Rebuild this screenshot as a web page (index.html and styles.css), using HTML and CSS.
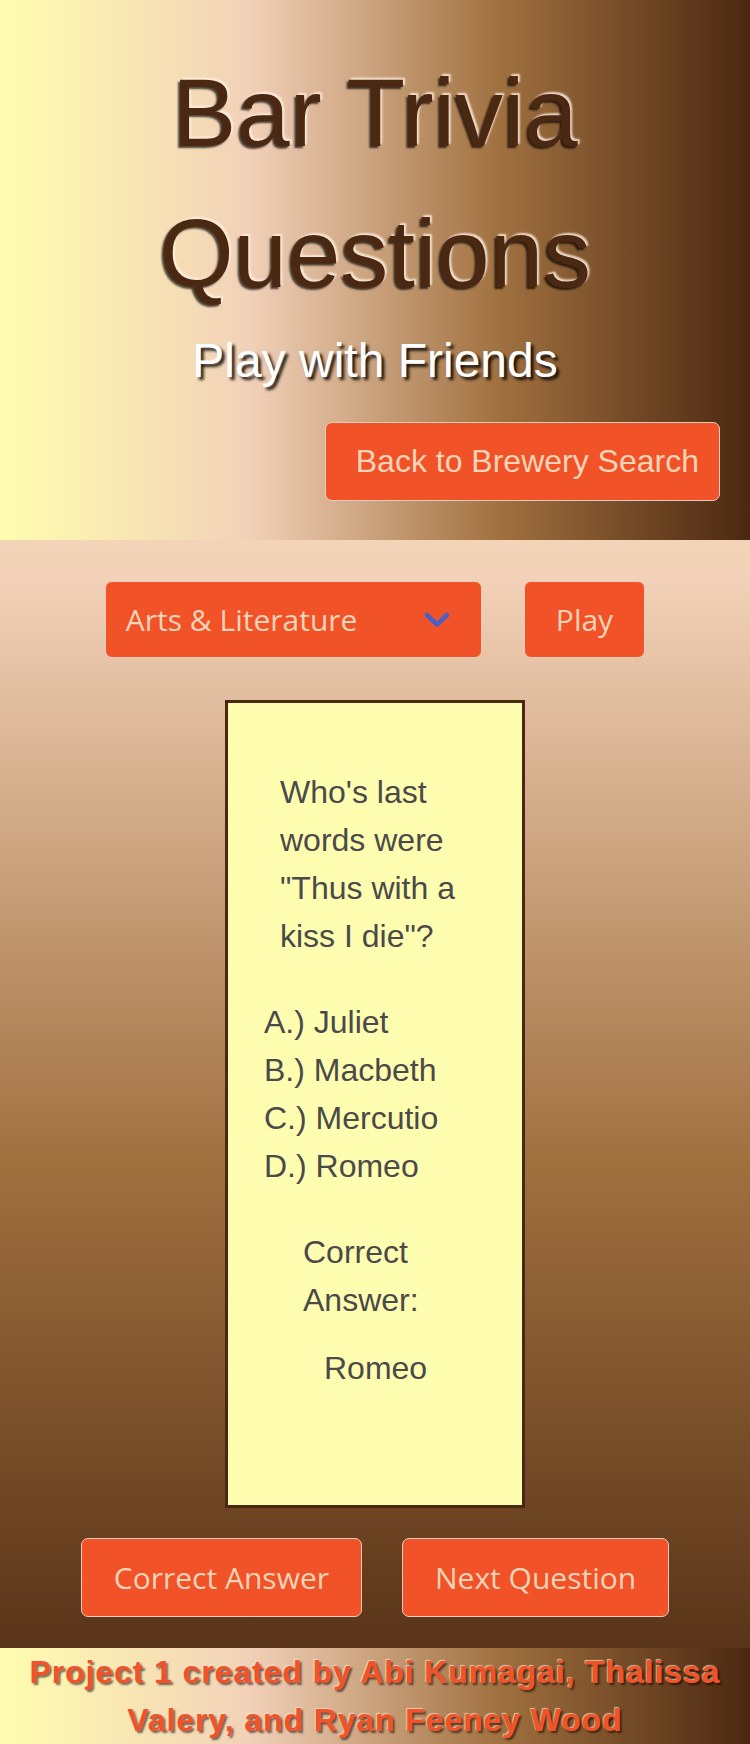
FILE: index.html
```html
<!DOCTYPE html>
<html lang="en">
<head>
<meta charset="utf-8">
<title>Bar Trivia Questions</title>
<link rel="stylesheet" href="styles.css">
</head>
<body>
<div class="page">
  <header class="hero">
    <h1 class="hero-title">Bar Trivia Questions</h1>
    <p class="hero-subtitle">Play with Friends</p>
    <div class="hero-actions">
      <a class="back-btn" href="#">Back to Brewery Search</a>
    </div>
  </header>

  <main class="game">
    <div class="controls">
      <div class="category-select">
        <span class="category-label">Arts &amp; Literature</span>
        <svg class="chevron" width="26" height="16" viewBox="0 0 26 16" aria-hidden="true">
          <polyline points="3,3 13,12.5 23,3" fill="none" stroke="#485fc7" stroke-width="4.5" stroke-linecap="round" stroke-linejoin="round"/>
        </svg>
      </div>
      <button class="btn btn-play" type="button">Play</button>
    </div>

    <section class="card">
      <p class="question">Who's last words were "Thus with a kiss I die"?</p>
      <ul class="answers">
        <li>A.) Juliet</li>
        <li>B.) Macbeth</li>
        <li>C.) Mercutio</li>
        <li>D.) Romeo</li>
      </ul>
      <p class="correct-label">Correct Answer:</p>
      <p class="correct-value">Romeo</p>
    </section>

    <div class="actions">
      <button class="btn btn-wide" type="button">Correct Answer</button>
      <button class="btn btn-wide" type="button">Next Question</button>
    </div>
  </main>

  <footer class="footer">
    <p class="footer-text">Project 1 created by Abi Kumagai, Thalissa Valery, and Ryan Feeney Wood</p>
  </footer>
</div>
</body>
</html>
```

FILE: styles.css
```css
* {
  box-sizing: border-box;
}

html, body {
  margin: 0;
  padding: 0;
}

body {
  font-family: "Liberation Sans", Arial, sans-serif;
}

.page {
  width: 750px;
  background: linear-gradient(to bottom, #fffdaf 0%, #f2d1b8 33.3%, #a0703f 66.7%, #4b2811 100%);
}

/* ---------- Header ---------- */
.hero {
  height: 540px;
  padding: 42px 0 0;
  background: linear-gradient(to right, #fffdaf 0%, #f2d1b8 33.3%, #a0703f 66.7%, #4b2811 100%);
  text-align: center;
}

.hero-title {
  margin: 0;
  font-size: 96px;
  line-height: 141px;
  font-weight: 400;
  color: #4b2812;
  text-shadow: -2px 2px 2px rgba(0, 0, 0, 0.7), 2px -2px 2px rgba(255, 240, 225, 0.85);
}

.hero-subtitle {
  margin: 9px 0 0;
  font-size: 48px;
  line-height: normal;
  color: #ffffff;
  text-shadow: 3px 3px 3px rgba(0, 0, 0, 0.85);
}

.hero-actions {
  display: flex;
  justify-content: flex-end;
  margin-top: 34px;
  padding-right: 30px;
}

.back-btn {
  display: block;
  padding: 20px 20px 20px 30px;
  font-family: "Liberation Sans", Arial, sans-serif;
  font-size: 32px;
  line-height: 37px;
  color: #f7d4b8;
  text-decoration: none;
  background: #f25227;
  border: 1px solid #ecccbc;
  border-radius: 7px;
}

/* ---------- Game ---------- */
.game {
  padding: 41px 0 31px;
}

.controls {
  display: flex;
  justify-content: center;
  gap: 42px;
}

.category-select {
  display: flex;
  align-items: center;
  justify-content: space-between;
  width: 377px;
  height: 77px;
  padding: 0 31px 0 20px;
  background: #f25227;
  border: 1px solid #ecccbc;
  border-radius: 7px;
  font-family: "Open Sans", "Noto Sans", sans-serif;
  font-size: 30px;
  color: #f7d4b8;
}

.chevron {
  display: block;
}

.btn {
  display: flex;
  align-items: center;
  justify-content: center;
  margin: 0;
  background: #f25227;
  border: 1px solid #ecccbc;
  border-radius: 7px;
  font-family: "Open Sans", "Noto Sans", sans-serif;
  font-size: 30px;
  line-height: normal;
  color: #f7d4b8;
  cursor: pointer;
}

.btn-play {
  height: 77px;
  padding: 0 31px;
}

.btn-wide {
  height: 79px;
  padding: 0 32px;
}

.card {
  width: 300px;
  margin: 42px auto 0;
  padding: 65px 0 113px;
  background: #fffdaf;
  border: 3px solid #4b2811;
  font-size: 32px;
  line-height: 48px;
  color: #4a4a4a;
}

.question {
  margin: 0 40px 0 52px;
}

.answers {
  list-style: none;
  margin: 38px 0 0 36px;
  padding: 0;
}

.correct-label {
  margin: 38px 40px 0 75px;
}

.correct-value {
  margin: 20px 0 0 96px;
}

.actions {
  display: flex;
  justify-content: center;
  gap: 40px;
  margin-top: 30px;
}

/* ---------- Footer ---------- */
.footer {
  height: 96px;
  background: linear-gradient(to right, #fffdaf 0%, #f2d1b8 33.3%, #a0703f 66.7%, #4b2811 100%);
  text-align: center;
}

.footer-text {
  margin: 0;
  font-size: 32px;
  font-weight: 700;
  letter-spacing: 0.9px;
  line-height: 48px;
  color: #f25227;
  text-shadow: 2px 2px 2px rgba(0, 0, 0, 0.55), -1px -1px 1px rgba(255, 235, 215, 0.7);
}
```
